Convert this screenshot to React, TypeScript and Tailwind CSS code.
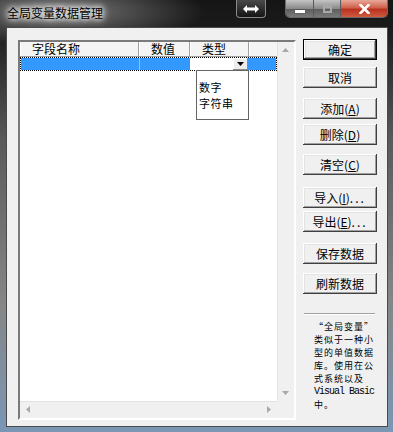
import React from "react";

const cjk = "font-['Noto_Sans_CJK_SC',sans-serif]";

const btnBase =
    "flex h-[21px] w-[74px] items-center justify-center bg-[#f0f0f0] text-[12px] leading-none text-black";
const raised =
    "shadow-[inset_-1px_-1px_#404040,inset_1px_1px_#ffffff,inset_-2px_-2px_#a0a0a0,inset_2px_2px_#e3e3e3]";

const Btn = ({ children, className = "", primary = false }: { children: React.ReactNode; className?: string; primary?: boolean }) => (
    <div className={`${btnBase} ${raised} ${primary ? "border border-black" : ""} ${className}`}>{children}</div>
);

const Tri = ({ dir, color = "#a8a8a8" }: { dir: "up" | "down" | "left" | "right"; color?: string }) => {
    const pts = {
        up: "0,4 7,4 3.5,0",
        down: "0,0 7,0 3.5,4",
        left: "4,0 4,7 0,3.5",
        right: "0,0 0,7 4,3.5",
    }[dir];
    const vertical = dir === "up" || dir === "down";
    return (
        <svg width={vertical ? 7 : 4} height={vertical ? 4 : 7} viewBox={vertical ? "0 0 7 4" : "0 0 4 7"}>
            <polygon points={pts} fill={color} />
        </svg>
    );
};

const headCell = "flex h-full items-center border-r border-[#a0a0a0] pl-[12px] text-[12px] leading-none text-black shadow-[inset_1px_0_#ffffff]";

export default function App() {
    return (
        <div
            className={`${cjk} relative flex h-[432px] w-[393px] flex-col overflow-hidden bg-[radial-gradient(ellipse_150px_34px_at_55px_11px,rgba(160,160,160,0.75),transparent),linear-gradient(180deg,#151515_0px,#1b1b1b_27px,#5a5a5a_140px,#858585_300px,#7b97b5_432px)]`}
        >
            {/* Title bar */}
            <div className="flex h-[27px] shrink-0 items-start">
                <span className="ml-[7px] mt-[6px] text-[12px] leading-[14px] text-black [text-shadow:0_0_5px_#ffffff,0_0_8px_#ffffff,0_0_10px_#ffffff]">
                    全局变量数据管理
                </span>
                <div className="ml-auto flex">
                    {/* toggle */}
                    <div className="flex h-[18px] w-[30px] items-center justify-center rounded-b-[4px] border border-t-0 border-[#8a8a8a] bg-[linear-gradient(180deg,#4a4a4a,#141414)]">
                        <svg width="16" height="8" viewBox="0 0 16 8">
                            <polygon points="0,4 4,0 4,2.5 12,2.5 12,0 16,4 12,8 12,5.5 4,5.5 4,8" fill="#ffffff" />
                        </svg>
                    </div>
                    <div className="ml-[19px] mr-[5px] flex h-[18px] overflow-hidden rounded-b-[5px] border border-t-0 border-[#6a6a6a]">
                        <div className="flex w-[28px] items-end justify-center border-r border-[#5a5a5a] bg-[linear-gradient(180deg,#c4c4c4,#8a8a8a_50%,#5e5e5e_55%,#7a7a7a)] pb-[4px]">
                            <div className="h-[3px] w-[10px] bg-white shadow-[0_0_1px_#000]" />
                        </div>
                        <div className="flex w-[27px] items-center justify-center border-r border-[#5a5a5a] bg-[linear-gradient(180deg,#c4c4c4,#8a8a8a_50%,#5e5e5e_55%,#7a7a7a)]">
                            <div className="h-[8px] w-[9px] border-2 border-t-[3px] border-[#a8a8a8]" />
                        </div>
                        <div className="flex w-[46px] items-center justify-center bg-[linear-gradient(180deg,#e8a898,#d0624c_45%,#b83220_55%,#d05a40)]">
                            <svg width="11" height="10" viewBox="0 0 11 10">
                                <path d="M1.5 1 L9.5 9 M9.5 1 L1.5 9" stroke="#ffffff" strokeWidth="2.6" strokeLinecap="square" />
                            </svg>
                        </div>
                    </div>
                </div>
            </div>

            {/* Frame + client */}
            <div className="flex flex-1">
                <div className="w-[6px] shrink-0" />
                <div className="flex h-[400px] w-[382px] items-start border border-[#4a4a4a] bg-[#f0f0f0] pl-[11px]">
                    {/* List view */}
                    <div className="mt-[12px] h-[380px] w-[278px] border-2 border-b-white border-l-[#7a7a7a] border-r-white border-t-[#7a7a7a] bg-white shadow-[inset_1px_1px_#404040]">
                        <div className="grid h-full grid-cols-[257px_17px] grid-rows-[359px_17px]">
                            <div className="relative bg-white">
                                {/* header */}
                                <div className="flex h-[15px] border-b border-[#a0a0a0] bg-[#f4f4f4]">
                                    <div className={`${headCell} w-[119px]`}>字段名称</div>
                                    <div className={`${headCell} w-[51px]`}>数值</div>
                                    <div className={`${headCell} w-[59px]`}>类型</div>
                                    <div className="h-full flex-1 shadow-[inset_1px_0_#ffffff]" />
                                </div>
                                {/* selected row */}
                                <div className="flex h-[14px] border border-dotted border-black">
                                    <div className="h-full w-[118px] bg-[#3399ff]" />
                                    <div className="h-full w-px bg-[#8cc4ff]" />
                                    <div className="h-full w-[50px] bg-[#3399ff]" />
                                    <div className="flex h-full w-[58px] bg-white">
                                        <div className="flex-1" />
                                        <div className="flex h-full w-[15px] items-center justify-center bg-[#ececec] shadow-[inset_-1px_-1px_#8a8a8a,inset_1px_1px_#ffffff]">
                                            <Tri dir="down" color="#000000" />
                                        </div>
                                    </div>
                                    <div className="h-full flex-1 bg-[#3399ff]" />
                                </div>
                                {/* dropdown */}
                                <div className="absolute left-[176px] top-[28px] h-[50px] w-[53px] border border-[#646464] bg-white pl-[2px] pt-[8px] text-[11px] leading-[16px] tracking-[0.5px] text-black">
                                    <div>数字</div>
                                    <div>字符串</div>
                                </div>
                            </div>
                            {/* vertical scrollbar */}
                            <div className="flex flex-col items-center justify-between bg-[#f0f0f0] py-[6px] shadow-[inset_1px_0_#e2e2e2]">
                                <Tri dir="up" />
                                <Tri dir="down" />
                            </div>
                            {/* horizontal scrollbar */}
                            <div className="flex items-center justify-between bg-[#f0f0f0] px-[6px] shadow-[inset_0_1px_#e2e2e2]">
                                <Tri dir="left" />
                                <Tri dir="right" />
                            </div>
                            <div className="bg-[#f0f0f0]" />
                        </div>
                    </div>

                    {/* Right column */}
                    <div className="ml-[7px] mt-[11px] flex w-[74px] flex-col">
                        <Btn primary>确定</Btn>
                        <Btn className="mt-[7px]">取消</Btn>
                        <Btn className="mt-[10px]">
                            添加(<u>A</u>)
                        </Btn>
                        <Btn className="mt-[5px]">
                            删除(<u>D</u>)
                        </Btn>
                        <Btn className="mt-[9px]">
                            清空(<u>C</u>)
                        </Btn>
                        <Btn className="mt-[12px]">
                            导入(<u>I</u>)<span className="tracking-[2px]">...</span>
                        </Btn>
                        <Btn className="mt-[3px]">
                            导出(<u>E</u>)<span className="tracking-[2px]">...</span>
                        </Btn>
                        <Btn className="mt-[11px]">保存数据</Btn>
                        <Btn className="mt-[9px]">刷新数据</Btn>
                        <div className="ml-px mt-[19px] h-[2px] w-[71px] border-t border-b border-t-[#a0a0a0] border-b-white" />
                        <div className="ml-[11px] mt-[5px] w-[63px] text-[9px] leading-[13px] tracking-[1px] text-black">
                            <div className="flex">
                                <span className="w-[10px]">“</span>
                                <span>全局变量</span>
                                <span className="w-[10px] text-right">”</span>
                            </div>
                            <div>类似于一种小</div>
                            <div>型的单值数据</div>
                            <div>库。使用在公</div>
                            <div>式系统以及</div>
                            <div className="font-['Liberation_Mono',monospace] text-[10px] tracking-[-1px]">Visual Basic</div>
                            <div>中。</div>
                        </div>
                    </div>
                </div>
                <div className="w-[5px] shrink-0" />
            </div>
        </div>
    );
}
